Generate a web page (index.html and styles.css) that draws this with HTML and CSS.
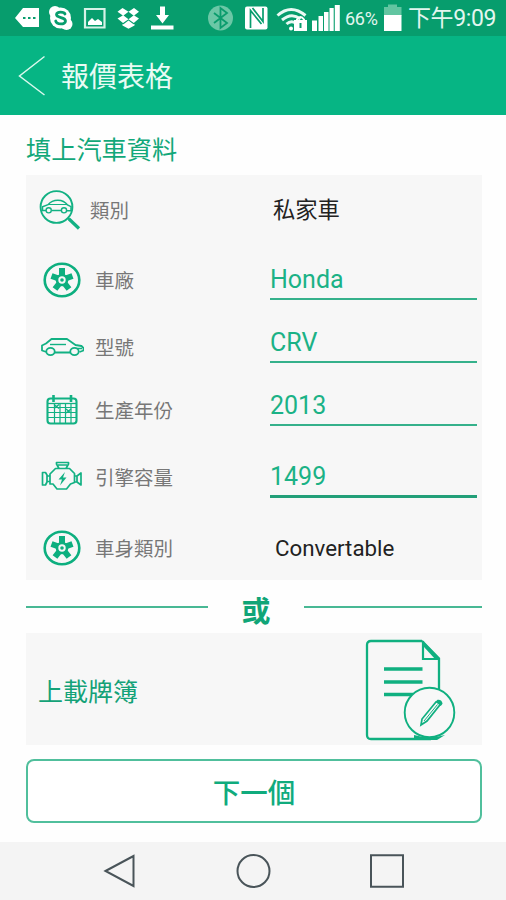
FILE: index.html
```html
<!DOCTYPE html>
<html lang="zh-Hant">
<head>
    <meta charset="UTF-8">
    <meta name="viewport" content="width=device-width, initial-scale=1.0">
    <title>報價表格</title>
    <link rel="stylesheet" href="styles.css">
</head>
<body>
    <div class="status-bar">
        <svg class="status-icons" width="180" height="36" viewBox="0 0 180 36" fill="#fff">
            <path fill-rule="evenodd" d="M15 18L23 8h16v19H23zM23 17v2h2.500v-2zM28 17v2h2.500v-2zM33 17v2h2.500v-2z"/>
            <circle cx="60.500" cy="18" r="10.500"/>
            <circle cx="55" cy="12" r="6"/>
            <circle cx="66.500" cy="24" r="6"/>
            <path d="M65 14c-.8-2.300-8.500-3-8.500.6 0 4 9 2 9 6.300 0 4.200-9 3.800-9.800.1" fill="none" stroke="#079d6d" stroke-width="2.800" stroke-linecap="round"/>
            <path d="M85 9h19.500v18.500H85z" fill="none" stroke="#d5f2e7" stroke-width="2.200"/>
            <path d="M88 25v-3l4-4 3 3 3-2 4 3v3z"/>
            <path d="M122.500 8l6 3.700-5.300 4-5.700-4zM134 8l-5.500 3.700 5.300 4 5.200-4zM117.500 18.500l5.700-3.300 5.300 4.100-5.500 3.600zM139 18.500l-5.200-3.300-5.300 4.100 5.300 3.600zM122.500 24l1 .2 5-3.700 5 3.700 1-.2v1.500l-6 3.300-6-3.300z"/>
            <path d="M160 6.500h5V15h4l-6.500 8.500L156 15h4zM151 25.500h22.500v4H151z"/>
        </svg>
        <svg class="status-icons" width="134" height="36" viewBox="206 0 134 36" fill="#fff">
            <circle cx="220.500" cy="18" r="12.500" fill="#6bc7a6"/>
            <path d="M214 13l13 10-6.500 5V8l6.500 5-13 10" fill="none" stroke="#0a9c6d" stroke-width="1.800"/>
            <rect x="245" y="6.500" width="22.500" height="23" rx="2"/>
            <path d="M250.500 28V10.500L261.500 24M252.500 8L263 21.500V8" fill="none" stroke="#079d6d" stroke-width="1.700"/>
            <g fill="none" stroke="#e9f9f3" stroke-width="3">
                <path d="M277.500 15.500q13.500-12 28 0"/>
                <path d="M282 20q9.500-8 18.500-1"/>
                <path d="M286.500 24q4.500-4 9-1"/>
            </g>
            <circle cx="291" cy="28.500" r="2"/>
            <path d="M294 20h13v11h-13z"/>
            <path d="M297 22v-2.500q3.500-5 7 0V22" fill="none" stroke="#fff" stroke-width="2"/>
            <path d="M299.500 23h2v5h-2z" fill="#079d6d"/>
            <path d="M312 20.500h5V31h-5zM318.500 16h4.500v15h-4.500zM324 12h4.500v19H324zM329.500 8h4.200v23h-4.200zM334.800 5h5v26h-5z"/>
        </svg>
        <span class="battery-text">66%</span>
        <svg class="battery" width="18" height="36" viewBox="0 0 18 36">
            <path d="M0 7h4V4.500h9V7h4.500v9H0z" fill="#62c5a1"/>
            <path d="M0 15h17.500v16H0z" fill="#fff"/>
        </svg>
        <span class="clock">下午9:09</span>
    </div>

    <header class="header">
        <svg width="28" height="42" viewBox="0 0 28 42" fill="none" stroke="#d9f8ed" stroke-width="1.500">
            <path d="M26.500 1.500L1.500 21l25 19"/>
        </svg>
        <h1>報價表格</h1>
    </header>

    <main class="content">
        <h2>填上汽車資料</h2>

        <div class="card">
            <div class="row row-type">
                <svg class="icon" width="44" height="42" viewBox="0 0 44 42" fill="none" stroke="#12b183">
                    <circle cx="18.500" cy="18" r="15.900" stroke-width="1.900"/>
                    <path d="M30 29l3 3" stroke-width="2"/>
                    <path d="M31 30l10 9.500" stroke-width="3.200"/>
                    <path d="M8 21.500H4.500v-3.800l5.500-2c5-6 15-6 19.500.3l3.500 1.700v4h-4M14 21.500h9" stroke-width="1.500"/>
                    <path d="M10 15.500h19" stroke-width="1"/>
                    <circle cx="10.700" cy="21.300" r="2.600" stroke-width="1.400"/>
                    <circle cx="26" cy="21.300" r="2.600" stroke-width="1.400"/>
                </svg>
                <span class="label">類別</span>
                <span class="value">私家車</span>
            </div>
            <div class="row row-make">
                <svg class="icon" width="44" height="40" viewBox="0 0 44 40">
                    <use href="#wheel"/>
                </svg>
                <span class="label">車廠</span>
                <span class="field">Honda</span>
            </div>
            <div class="row row-model">
                <svg class="icon" width="44" height="24" viewBox="0 0 44 24" fill="none" stroke="#12b183" stroke-width="1.800" stroke-linejoin="round">
                    <path d="M6.500 17L2 15.500v-5l4-2L11.500 4H27l8.500 6 6 1 2 2v2.500l-4 1.500M14.500 17.500h16"/>
                    <path d="M10 9.500h16" stroke-width="1.400"/>
                    <path d="M37 13.500h5" stroke-width="1.500"/>
                    <ellipse cx="10.500" cy="16.500" rx="4.200" ry="3.600"/>
                    <ellipse cx="34.500" cy="16.500" rx="4.200" ry="3.600"/>
                </svg>
                <span class="label">型號</span>
                <span class="field">CRV</span>
            </div>
            <div class="row row-year">
                <svg class="icon" width="44" height="32" viewBox="0 0 44 32" fill="none" stroke="#12b183">
                    <rect x="7.500" y="4.500" width="29" height="25" rx="3" stroke-width="2.100"/>
                    <path d="M13.500 1v7M31 1v7" stroke-width="2.600"/>
                    <path d="M8 9.500h28" stroke-width="1.300"/>
                    <path d="M8 13.500h28M8 18.500h28M8 23.500h28M14.500 10v19M20 10v19M25.500 10v19M31 10v19" stroke-width="1.200"/>
                    <path d="M14 10.500l5 4M19 10.500l-5 4M26 15l5 4M31 15l-5 4" stroke-width="1.400"/>
                </svg>
                <span class="label">生產年份</span>
                <span class="field">2013</span>
            </div>
            <div class="row row-engine">
                <svg class="icon" width="44" height="34" viewBox="0 0 44 34" fill="none" stroke="#12b183" stroke-width="1.700" stroke-linejoin="round">
                    <path d="M10 14l5.500-5.500h14l5 5v9l-4 1.500-4 5H17l-4-5h-3zM19 8.500L16.500 4V2.500h12V4L26 8.500M18 5h9"/>
                    <path d="M2.500 12.500h3l1.500 2.500v7l-1.500 3h-3zM7 16h3M7 21.500h3M34.500 16H37l4-3v12l-4-3h-2.500M37 16v6"/>
                    <path d="M25 12l-6.500 7.500H22l-2 6 6.500-8H23z" fill="#12b183" stroke="none"/>
                </svg>
                <span class="label">引擎容量</span>
                <span class="field active">1499</span>
            </div>
            <div class="row row-body">
                <svg class="icon" width="44" height="40" viewBox="0 0 44 40">
                    <g id="wheel">
                        <ellipse cx="22" cy="20" rx="17.300" ry="16.300" fill="none" stroke="#0daf7f" stroke-width="2.600"/>
                        <g stroke="#0daf7f" stroke-width="6">
                            <path d="M22 17V8M24 19l8.500-3M23.500 22l5.500 7M20.500 22L15 29M20 19l-8.500-3"/>
                        </g>
                        <circle cx="22" cy="20" r="6.300" fill="#0daf7f"/>
                        <circle cx="22" cy="20" r="3.700" fill="#f7f7f7"/>
                        <circle cx="22" cy="20" r="1.800" fill="#0daf7f"/>
                    </g>
                </svg>
                <span class="label">車身類別</span>
                <span class="value">Convertable</span>
            </div>
        </div>

        <div class="divider">
            <span>或</span>
        </div>

        <div class="upload">
            <span>上載牌簿</span>
            <svg width="92" height="104" viewBox="0 0 92 104" fill="none" stroke="#10b080" stroke-width="2.300">
                <path d="M58 3H7q-4 0-4 4v90q0 4 4 4h60M58 3l17 17.500V51"/>
                <path d="M59 3v18h16" stroke-width="2.200"/>
                <path d="M58 2l18 19h-5L60 9z" fill="#10b080" stroke="none"/>
                <path d="M20 31h38.500M20 44h38.500M20 56.500h29" stroke-width="3.500"/>
                <circle cx="65.500" cy="74.500" r="24.800" fill="#f8f8f8" stroke-width="1.900"/>
                <path d="M50 97q15.500 4.500 31 0l-8 5H50z" fill="#10b080" stroke="none"/>
                <path d="M57 87l1-6 14-17q3.500-2 5 1.500L63 83z" stroke-width="1.700"/>
                <path d="M60 83l13.500-16.500" stroke-width="1"/>
                <path d="M71.500 64l2-2.200q4.500-.5 5 4l-1.700 2.200z" fill="#10b080" stroke="none"/>
            </svg>
        </div>

        <button class="next">下一個</button>
    </main>

    <nav class="nav">
        <svg width="36" height="36" viewBox="0 0 36 36"><path d="M4.500 18L32.500 3v30z"/></svg>
        <svg width="36" height="36" viewBox="0 0 36 36"><circle cx="18.500" cy="18" r="16"/></svg>
        <svg width="36" height="36" viewBox="0 0 36 36"><path d="M2 2.300h32v31.500H2z"/></svg>
    </nav>
</body>
</html>
```

FILE: styles.css
```css
* {
    box-sizing: border-box;
}
body {
    font-family: Roboto, "Noto Sans CJK TC", sans-serif;
    background-color: #fefefe;
    color: #222222;
    margin: 0;
    height: 900px;
    display: flex;
    flex-direction: column;
    overflow: hidden;
}
svg {
    display: block;
    flex-shrink: 0;
}
.status-bar {
    height: 36px;
    background-color: #079d6d;
    color: #e3f6ef;
    display: flex;
    align-items: center;
    white-space: nowrap;
}
.status-icons + .status-icons {
    margin-left: 26px;
}
.battery-text {
    width: 39px;
    margin-left: 5px;
    font-size: 18px;
    letter-spacing: -0.3px;
}
.battery {
    width: 18px;
}
.clock {
    margin-left: 6px;
    padding-top: 2px;
    font-size: 23px;
    line-height: 34px;
    letter-spacing: -0.4px;
}
.header {
    height: 79px;
    background-color: #06b584;
    display: flex;
    align-items: center;
    padding-left: 18px;
}
h1 {
    margin: 0 0 0 15px;
    padding-top: 5px;
    color: #e8fbf4;
    font-size: 28px;
    font-weight: 400;
    line-height: 40px;
}
.content {
    height: 727px;
    padding: 17px 24px 0 26px;
}
h2 {
    margin: 0;
    color: #12a87a;
    font-size: 25.2px;
    font-weight: 400;
    line-height: 38px;
    height: 43px;
}
.card {
    height: 405px;
    background-color: #f7f7f7;
    display: grid;
    grid-template-rows: 70px 70px 64px 62px 72px 67px;
}
.row {
    display: grid;
    grid-template-columns: 44px 164px 207px;
    column-gap: 11px;
    padding-left: 14px;
    align-items: center;
}
.row-type {
    padding-left: 12px;
    grid-template-columns: 44px 167px 207px;
    column-gap: 8px;
}
.row-body {
    padding-top: 3px;
}
.row-make .field,
.row-engine .field {
    margin-bottom: 15px;
}
.row-model .field {
    margin-bottom: 16px;
}
.row-year .field {
    margin-bottom: 15px;
}
.label {
    padding-top: 3px;
    color: #777777;
    font-size: 19.5px;
    line-height: 30px;
}
.value {
    padding-left: 8px;
    font-size: 22.3px;
    line-height: 30px;
}
.row-body .value {
    padding-left: 5px;
}
.field {
    align-self: end;
    width: 207px;
    border-bottom: 2px solid #35b18b;
    color: #1bb286;
    font-size: 25px;
    line-height: 36px;
}
.field.active {
    border-bottom: 3px solid #229f78;
}
.divider {
    height: 53px;
    display: grid;
    grid-template-columns: 182px 96px 178px;
    align-items: center;
    color: #10a577;
    font-size: 29px;
    font-weight: 700;
    line-height: 40px;
}
.divider span {
    text-align: center;
    padding-top: 10px;
}
.divider::before,
.divider::after {
    content: "";
    height: 2px;
    background-color: #48b894;
}
.upload {
    height: 112px;
    background-color: #f7f7f7;
    color: #14a278;
    display: flex;
    align-items: center;
    justify-content: space-between;
    padding: 2px 26px 0 12px;
    font-size: 25px;
}
.next {
    display: block;
    width: 456px;
    height: 64px;
    margin-top: 14px;
    background-color: #ffffff;
    border: 2px solid #50bf9c;
    border-radius: 8px;
    color: #10ab7d;
    font-family: inherit;
    font-size: 27.5px;
    font-weight: 500;
}
.nav {
    height: 58px;
    background-color: #f4f4f4;
    display: flex;
    justify-content: center;
    align-items: center;
    gap: 98px;
}
.nav svg {
    fill: none;
    stroke: #495459;
    stroke-width: 2;
}
```
